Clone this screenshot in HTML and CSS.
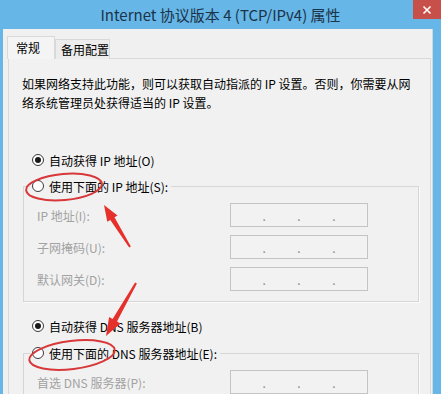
FILE: index.html
```html
<!DOCTYPE html>
<html lang="zh-CN">
<head>
<meta charset="utf-8">
<title>Internet 协议版本 4 (TCP/IPv4) 属性</title>
<link rel="stylesheet" href="styles.css">
</head>
<body>
<div class="window">
  <div class="titlebar">
    <span class="title">Internet 协议版本 4 (TCP/IPv4) 属性</span>
    <span class="close"><svg width="10" height="10" viewBox="0 0 10 10"><path d="M1.5 1.5 L8.5 8.5 M8.5 1.5 L1.5 8.5" stroke="#fff" stroke-width="1.6"/></svg></span>
  </div>
  <div class="client">
    <div class="tabs">
      <div class="tab active">常规</div>
      <div class="tab">备用配置</div>
    </div>
    <div class="panel">
      <p class="desc">如果网络支持此功能，则可以获取自动指派的 IP 设置。否则，你需要从网<br>络系统管理员处获得适当的 IP 设置。</p>

      <div class="radio first"><span class="dot checked"></span>自动获得 IP 地址(O)</div>
      <fieldset class="group">
        <legend class="radio"><span class="dot"></span>使用下面的 IP 地址(S):</legend>
        <div class="row"><span class="lbl">IP 地址(I):</span><span class="ipbox"><i>.</i><i>.</i><i>.</i></span></div>
        <div class="row"><span class="lbl">子网掩码(U):</span><span class="ipbox"><i>.</i><i>.</i><i>.</i></span></div>
        <div class="row"><span class="lbl">默认网关(D):</span><span class="ipbox"><i>.</i><i>.</i><i>.</i></span></div>
      </fieldset>

      <div class="radio second"><span class="dot checked"></span>自动获得 DNS 服务器地址(B)</div>
      <fieldset class="group group2">
        <legend class="radio"><span class="dot"></span>使用下面的 DNS 服务器地址(E):</legend>
        <div class="row"><span class="lbl">首选 DNS 服务器(P):</span><span class="ipbox"><i>.</i><i>.</i><i>.</i></span></div>
      </fieldset>
    </div>
  </div>
  <svg class="marks" width="441" height="394" viewBox="0 0 441 394">
    <ellipse cx="64" cy="187" rx="38" ry="13" transform="rotate(-5 64 187)" fill="none" stroke="#d8383a" stroke-width="2"/>
    <ellipse cx="72" cy="355" rx="43" ry="14" transform="rotate(-7 72 355)" fill="none" stroke="#d8383a" stroke-width="2"/>
    <polygon points="104,205 117.5,215.4 114.5,217.3 130.85,246.5 129.15,247.5 110.3,219.9 107.3,221.8" fill="#e5302b"/>
    <polygon points="106,336 120.5,323.5 117,321.5 136.9,283.5 135.1,282.5 112.6,319.1 109.1,317.1" fill="#e5302b"/>
  </svg>
</div>
</body>
</html>
```
FILE: styles.css
```css
* { box-sizing: border-box; }
html, body { margin: 0; padding: 0; }
body {
  width: 441px;
  height: 394px;
  overflow: hidden;
  background: #f0f0f0;
  font-family: "Noto Sans CJK SC", "Microsoft YaHei", sans-serif;
  font-size: 12px;
  color: #000;
}
.window {
  position: relative;
  width: 441px;
  height: 394px;
  overflow: hidden;
  background: #66b6e8;
  display: flex;
  flex-direction: column;
}
.titlebar {
  height: 29px;
  flex: 0 0 29px;
  display: flex;
  align-items: center;
  justify-content: center;
  position: relative;
}
.title {
  font-size: 15px;
  color: #1b3347;
  line-height: 29px;
}
.close {
  position: absolute;
  top: 0;
  right: 0;
  width: 28px;
  height: 19px;
  background: #c8504a;
  display: flex;
  align-items: center;
  justify-content: center;
}
.client {
  flex: 1;
  min-height: 0;
  margin: 0 8px 0 3px;
  background: #f0f0f0;
  padding: 7px 1px 0 5px;
  display: flex;
  flex-direction: column;
  border-right: 1px solid #d0d8dc;
  overflow: hidden;
}
.tabs {
  display: flex;
  align-items: flex-end;
  height: 23px;
  flex: 0 0 23px;
  margin-bottom: -1px;
  position: relative;
  z-index: 1;
}
.tab {
  height: 20px;
  width: 55px;
  padding-left: 5px;
  border: 1px solid #d9d9d9;
  border-bottom: none;
  background: #ececec;
  line-height: 19px;
  color: #000;
}
.tab.active {
  height: 23px;
  width: 48px;
  margin-left: -1px;
  padding-left: 8px;
  background: #f4f4f4;
  line-height: 21px;
}
.panel {
  flex: 1;
  min-height: 0;
  overflow: hidden;
  border: 1px solid #d9d9d9;
  border-bottom: none;
  background: #f1f1f1;
  padding: 14px 0 0 13px;
}
.desc {
  margin: 0;
  line-height: 19px;
  white-space: nowrap;
  padding-top: 1px;
}
.radio {
  display: flex;
  align-items: center;
  height: 20px;
  white-space: nowrap;
}
.radio.first { margin-top: 38px; padding-left: 10px; }
.radio.second { margin-top: 14px; padding-left: 10px; }
.dot {
  width: 12px;
  height: 12px;
  border-radius: 50%;
  border: 1px solid #3a3a3a;
  background: #fff;
  margin-right: 5px;
  display: flex;
  align-items: center;
  justify-content: center;
}
.dot.checked::after {
  content: "";
  width: 6px;
  height: 6px;
  border-radius: 50%;
  background: #1a1a1a;
}
.group {
  margin: 6px 0 0 1px;
  width: 396px;
  padding: 7px 0 10px 13px;
  border: 1px solid #d6d6d6;
  box-shadow: 1px 1px 0 #fbfbfb;
  min-width: 0;
}
.group2 { margin-top: 7px; }
.group legend {
  padding: 0 3px 0 2px;
  margin-left: -7px;
}
.row {
  display: flex;
  align-items: center;
  height: 24px;
  margin-bottom: 8px;
}
.row:last-child { margin-bottom: 0; }
.lbl {
  flex: 0 0 193px;
  color: #a2a2a2;
}
.ipbox {
  width: 138px;
  height: 24px;
  border: 1px solid #c4c4c4;
  background: #f2f2f2;
  display: flex;
  justify-content: space-evenly;
  align-items: center;
}
.ipbox i {
  font-style: normal;
  color: #8a8a8a;
  font-size: 12px;
  line-height: 12px;
  padding-top: 2px;
}
.marks {
  position: absolute;
  top: 0;
  left: 0;
  pointer-events: none;
}
```
